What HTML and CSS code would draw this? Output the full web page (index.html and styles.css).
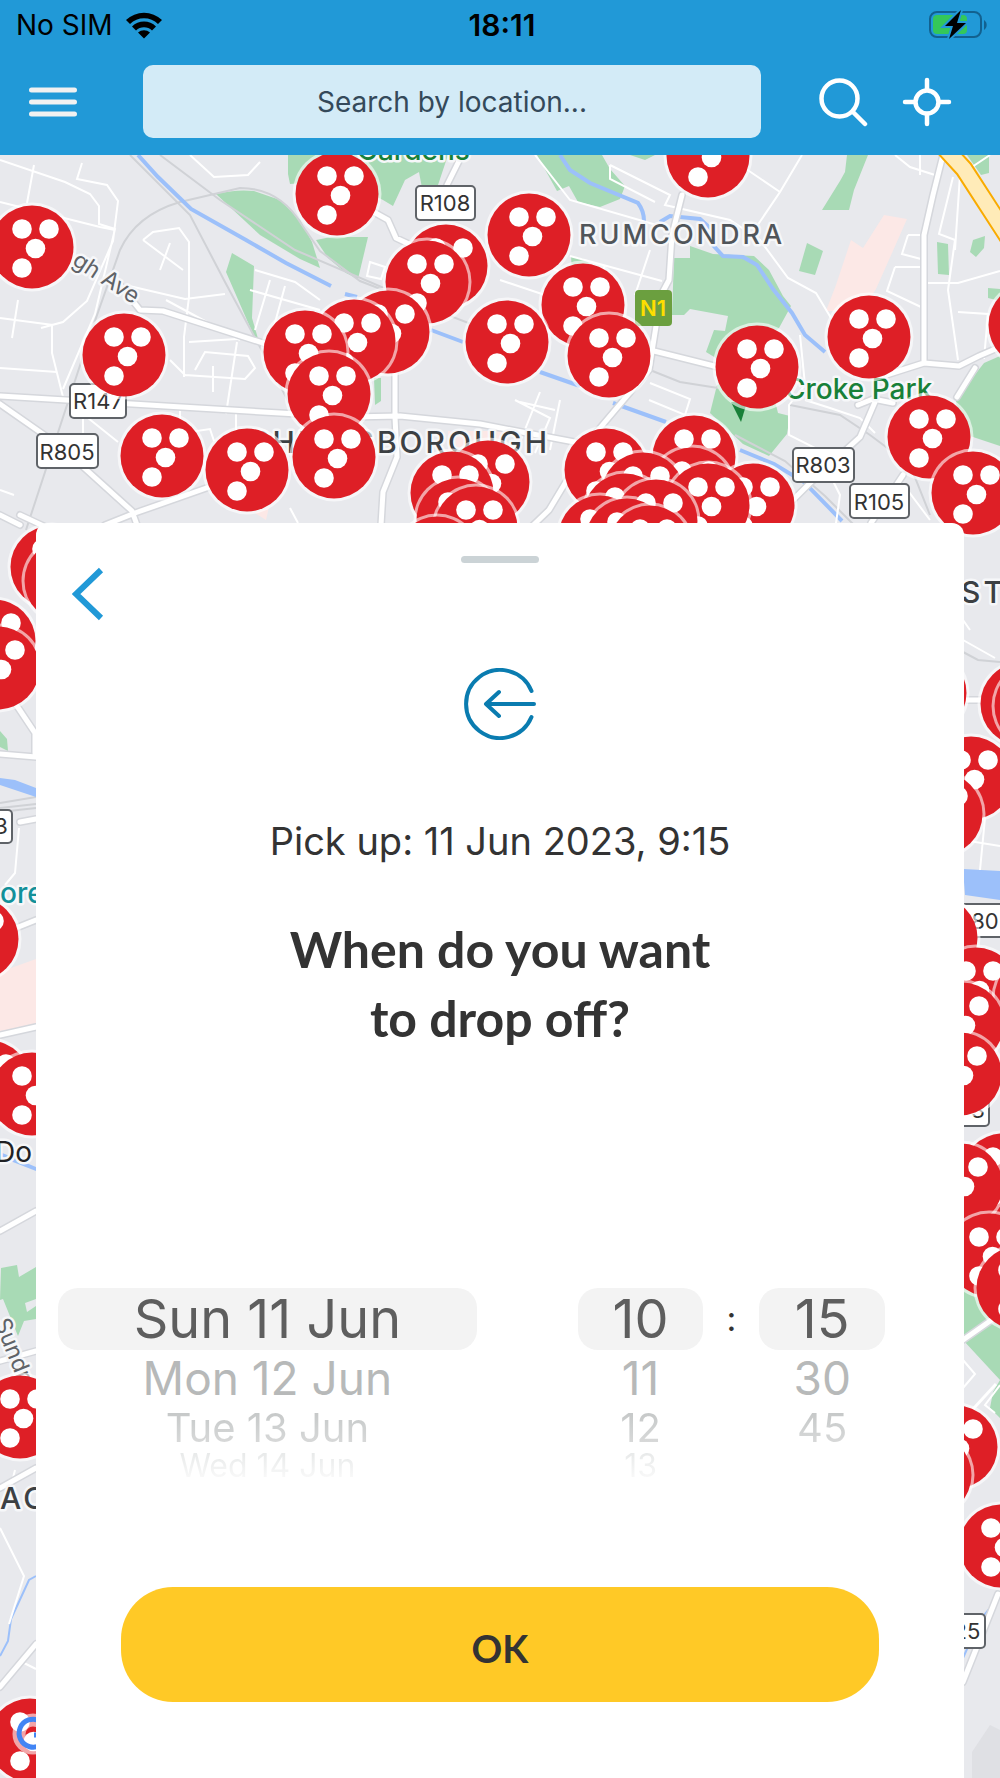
FILE: index.html
```html
<!DOCTYPE html>
<html lang="en">
<head>
<meta charset="utf-8">
<meta name="viewport" content="width=device-width, initial-scale=1">
<title>Choose drop off time</title>
<link rel="stylesheet" href="styles.css">
</head>
<body>
<div class="app">
  <header class="header">
    <div class="status">
      <div class="status-left">
        <span>No SIM</span>
        <svg class="wifi" viewBox="0 0 38 28" aria-hidden="true"><path d="M1 9a26 26 0 0 1 36 0l-4 4a20 20 0 0 0-28 0zM7 15.500a17 17 0 0 1 24 0l-4 4a11.500 11.500 0 0 0-16 0zM13 21.500a9 9 0 0 1 12 0l-6 6z"/></svg>
      </div>
      <time class="clock">18:11</time>
      <svg class="battery" viewBox="0 0 60 30" role="img" aria-label="Battery charging">
        <rect x="2" y="2" width="51" height="25" rx="7" fill="none" stroke="#12618f" stroke-width="2"/>
        <path d="M56 10a6 6 0 0 1 0 10z" fill="#12618f"/>
        <rect x="5" y="5" width="34" height="19" rx="4" fill="#34c759"/>
        <path d="M33 0 17 16h8l-4 13 17-16h-9l4-13z" fill="#000" stroke="#2199d7" stroke-width="4" paint-order="stroke"/>
      </svg>
    </div>
    <div class="toolbar">
      <button class="icon-button" aria-label="Menu"><svg width="50" height="32" viewBox="0 0 50 32"><path d="M3.500 4h43M3.500 16h43M3.500 28h43" stroke="#f1f1f1" stroke-width="5" stroke-linecap="round"/></svg></button>
      <input class="search" type="text" placeholder="Search by location..." aria-label="Search by location">
      <div class="tools">
        <button class="icon-button" aria-label="Search"><svg width="50" height="50" viewBox="0 0 50 50" fill="none" stroke="#fff" stroke-width="4.500" stroke-linecap="round"><circle cx="21.500" cy="21.500" r="18"/><path d="m35 35 12 12"/></svg></button>
        <button class="icon-button" aria-label="My location"><svg width="50" height="50" viewBox="0 0 50 50" fill="none" stroke="#fff" stroke-width="4.500" stroke-linecap="round"><circle cx="25" cy="25" r="11.500"/><path d="M25 3v10M25 37v10M3 25h10M37 25h10"/></svg></button>
      </div>
    </div>
  </header>

  <main class="main">
    <svg class="map" viewBox="0 155 1000 1623" preserveAspectRatio="xMidYMin slice" role="img" aria-label="Map of pick up points">
      <defs>
        <g id="pin">
          <circle r="44.500" fill="#fff" fill-opacity=".6"/>
          <circle r="41.500" fill="#de1f26"/>
          <g fill="#fff"><circle cx="-10" cy="-18" r="9.800"/><circle cx="17" cy="-18" r="9.800"/><circle cx="3.500" cy="1.500" r="9.800"/><circle cx="-10" cy="21" r="9.800"/></g>
        </g>
      </defs>
      <rect y="155" width="1000" height="1623" fill="#e8e9ed"/>

      <!-- parks -->
      <g fill="#a8dab5">
        <path d="M216 194q20-5 38-3l26 9 20 20 12 22 8 26-20-9-40-24z"/>
        <path d="M316 240l15-3h37l-10 42-12-6-18-15z"/>
        <path d="M232 253l22 13-2 52 7 24-6-8-27-62z"/>
        <path d="M288 155h160l-10 30-16 3-3-16-14 8-12 26-10-6-40-20-53 4-2-10z"/>
        <path d="M537 155h65l8 14 15 17-5 13-20 8-22-5-9-16-12 5z"/>
        <path d="M630 155h25l-10 5z"/>
        <path d="M847 155h21l-14 35-5 20h-27l18-29 5-9z"/>
        <path d="M967 155h22v18l-8 2z"/>
        <path d="M674 258h16v-12l23 8 41 2 15 14 14 26 8 10-12 22-30 26-20 12-23-14 8-22 11 1 3-15-38-7-6 6h-12z"/>
        <path d="M807 243l16 8-8 24-16-4zM937 242l11 2 1 31-11-1zM973 240l12-4-1 12-8 9-6-5zM988 288l12 1v12l-12-3z"/>
        <path d="M717 385l36-12 20 20 5 20 12 3-3 18-18 22-26-12-33-31z"/>
        <path d="M956 399l28-36 16-7v90l-30-10-13-22z"/>
        <path d="M374 378h7v23l-6 4z"/>
        <path d="M571 256l13 3 12 10-24 2z"/>
        <path d="M0 731l7 8 1 12-8-4z"/>
        <path d="M1 1268l16-3 2 12 17-10v52l-12 2-6 15-15-37-3 1z"/>
        <path d="M963 1285h37v133l-10-10 3-16 7-12-37-40z"/>
      </g>
      <path d="M25 1303l11-4v7l-9 6z" fill="#e8e9ed"/>
      <!-- hospitals and civic areas -->
      <g fill="#fce8e6">
        <path d="M884 215l23 4-15 34-16 36-14 22h-36l10-26 15-45 12 8z"/>
        <path d="M0 972l36-13v68l-36 4zM448 431h55l-7 40-48-12zM255 513l14-6-3 13z"/>
      </g>
      <path d="M972 1752l18-27 10 5v48h-28z" fill="#dfe0e4"/>

      <!-- railways -->
      <g fill="none" stroke="#d0d2d6" stroke-width="2">
        <path d="M26 530 90 335l30-85q16-35 60-48l60-14q40 0 62 37l18 26 40 30 150 58"/>
        <path d="M160 155l60 45 75 50 145 62M130 155l60 60 35 67 35 65 40 77"/>
        <path d="M650 370l30 12 38 6M735 435l50 26 40 35 30 30M790 405l50 10 30 20 40 30 20 50"/>
        <path d="M0 803l36-6M0 808l36-4M0 812l36-4M963 652l15 8 22 2"/>
      </g>

      <!-- water -->
      <g fill="none" stroke="#9cc0fa" stroke-width="4">
        <path d="M138 155l20 22 33 32 55 31 40 23 45 23"/>
        <path d="M345 294l12 3M431 330l32 12M540 372l40 14M613 403l53 19M740 450l34 14 30 18 38 39"/>
        <path d="M560 155l10 15 20 13 48 20q6 8 6 18M660 222l10-6 30 3 11 10v14l12 13 20 1 14 8 16 24 19 24 13 22 20 17"/>
      </g>
      <path d="M0 1656l8-15 3-22 18-39 7-4M1000 1596l-20 24-17 38" fill="none" stroke="#9cc0fa" stroke-width="2"/>
      <path d="M0 778l15 2 21 8v9l-36-12zM963 869l37 2v29l-35-5zM0 1152l36 15v4l-36-14z" fill="#9cc0fa"/>

      <!-- side streets -->
      <g fill="none" stroke="#fff" stroke-width="2">
        <path d="M0 160l65 22 25 12 9 12v18l16 5-20 85-32 75M34 165l-7 38M82 163l-5 16 30 6 11 16-5 40-26 60-24 21-22 6M0 202l100 25 15 3M0 318l53 7M18 300l-6 38M0 368l57 4M52 325v28l12 48M57 225l-5 52"/>
        <path d="M143 240l10-8 26-4 10 14v55l-5 40v40M143 240l40 30M160 270l10-27M125 285l60 14 40-5M166 300l74 40M189 342l48-3M170 360l15 15 60 4 10-11-7-12-43-4-10 18M213 366v26M237 342l-11 72"/>
        <path d="M255 270l40 12 25 18M250 290l70 20M270 280l-15 50M285 286l-15 55M190 155l24 22 34-2 12-13M370 262l15 5-4 12-14-3zM180 405v23l10 4 20-3 4 12M236 414v28M83 414v28M83 414l35 28M290 508l8 15M0 490l14 5"/>
        <path d="M535 155l35 45 90 26M610 165l60 30-5 10 65 15 30 20 28 38 28 15 15 25M610 165v14l45 23M730 158l50 34M802 155l-22 37-25 37"/>
        <path d="M570 256l92 25M545 265l75 35M650 250l-15 45M605 265l-10 30M500 280l60 20 25 50"/>
        <path d="M650 383l40 16-5 16-36-15M515 400l35 18-15 35M520 402l35 8M540 392l-20 50M560 400l-10 50M800 335l5 50-16 20v30l40 20 11 20 12-5M805 400l25 8 30 10 15 15"/>
        <path d="M895 155l15 12 25 8M920 155v20M953 177l-14 57 16 6-7 50 10 70M990 155l-30 20-5 75M908 235h15M908 235l-6 19 19 5M895 267h28M895 267l-8 24 34 16M928 283h30l42-12M958 312l30 2-4 45"/>
        <path d="M830 475l10 20-5 35M900 480l30 40M760 480l30 30"/>
        <path d="M5 885l10-12 4-45M0 1528l24 48-15 48M20 1661l16 8M15 1470l-5 20M963 620l7 10M963 640l32 18M963 1360l12 14-12 14M1000 1385l-15 20 10 8"/>
        <path d="M963 840l37 6M985 818l-5 52"/>
      </g>
      <path d="M963 1420l33-36" stroke="#fff" stroke-width="3"/>

      <!-- main roads -->
      <g fill="none" stroke-linecap="round" stroke-linejoin="round">
        <path d="M120 285l20 25 23 1 150 48M0 396l280 17 70 4 50-1 80 8 105 20M0 404l60 42 72 65 5 14M105 525l30-12 80-28 25-6M395 360v57l2 40-14 35-2 33M462 155l-15 30M370 210l18 10 8 18 60 28M682 195l-10 40-3 45-8 15-12 75-55 65-45 75-25 24M650 350l68 17M943 155l-10 40-9 40v128l35 3 20-10 21-9M924 363l-44 14M975 368l-18 29M858 405l15-6 20 4M875 402l-15 35-22 20-30 28-20 20M903 475l-32 48M0 515l20 10M20 515l30 14M15 703l20 30v20M0 754l36 3M20 822l16-3M16 928l20-8M0 1035l36-8M0 1231l36-20M0 1361l36-10M0 1488l36-20M0 1687l36-43M963 1340l37-26M963 1682l35-88M963 700h20" stroke="#d5d7dc" stroke-width="8"/>
        <path d="M120 285l20 25 23 1 150 48M0 396l280 17 70 4 50-1 80 8 105 20M0 404l60 42 72 65 5 14M105 525l30-12 80-28 25-6M395 360v57l2 40-14 35-2 33M462 155l-15 30M370 210l18 10 8 18 60 28M682 195l-10 40-3 45-8 15-12 75-55 65-45 75-25 24M650 350l68 17M943 155l-10 40-9 40v128l35 3 20-10 21-9M924 363l-44 14M975 368l-18 29M858 405l15-6 20 4M875 402l-15 35-22 20-30 28-20 20M903 475l-32 48M0 515l20 10M20 515l30 14M15 703l20 30v20M0 754l36 3M20 822l16-3M16 928l20-8M0 1035l36-8M0 1231l36-20M0 1361l36-10M0 1488l36-20M0 1687l36-43M963 1340l37-26M963 1682l35-88M963 700h20" stroke="#fff" stroke-width="5"/>
        <path d="M942 145l22 24 44 68" stroke="#f9ab00" stroke-width="19"/>
        <path d="M942 145l22 24 44 68" stroke="#ffebb8" stroke-width="15"/>
      </g>

      <!-- place names -->
      <g class="halo">
        <text x="357" y="160" class="poi">Gardens</text>
        <text x="785" y="399" class="poi">Croke Park</text>
        <text x="0" y="903" class="poi teal">ore</text>
        <text x="574" y="244" class="area" text-anchor="end">D</text>
        <text x="579" y="244" class="area">RUMCONDRA</text>
        <text x="550" y="453" class="area dark" text-anchor="end">PHIBBSBOROUGH</text>
        <text x="961" y="603" class="area dark">ST</text>
        <text x="0" y="1509" class="area dark">AC</text>
        <text x="-5" y="1162" class="town">Do</text>
        <text x="71" y="264" class="street" transform="rotate(33 71 264)">gh Ave</text>
        <text x="-6" y="1322" class="street" transform="rotate(68 -6 1322)">Sundr</text>
      </g>
      <path d="M731 402h16l-6 20z" fill="#188038"/>

      <!-- road shields -->
      <g fill="#fff" stroke="#5f6368" stroke-width="2">
        <rect x="416" y="186" width="59" height="34" rx="4"/><rect x="70" y="384" width="56" height="34" rx="4"/>
        <rect x="37" y="434" width="61" height="34" rx="4"/><rect x="793" y="448" width="61" height="34" rx="4"/>
        <rect x="850" y="484" width="59" height="34" rx="4"/><rect x="-40" y="810" width="52" height="33" rx="4"/>
        <rect x="940" y="904" width="70" height="33" rx="4"/><rect x="930" y="1095" width="59" height="31" rx="4"/>
        <rect x="926" y="1614" width="59" height="34" rx="4"/>
      </g>
      <rect x="635" y="290" width="37" height="36" rx="4" fill="#6b9f3f"/>
      <g class="shield">
        <text x="445" y="211">R108</text><text x="98" y="409">R147</text><text x="67" y="460">R805</text>
        <text x="823" y="473">R803</text><text x="879" y="510">R105</text><text x="1" y="834">3</text>
        <text x="985" y="929">80</text><text x="978" y="1118">3</text><text x="967" y="1639">25</text>
        <text x="653" y="316" class="national">N1</text>
      </g>

      <!-- pick up points -->
      <g>
        <use href="#pin" x="32" y="247"/><use href="#pin" x="337" y="194"/><use href="#pin" x="124" y="355"/>
        <use href="#pin" x="446" y="266"/><use href="#pin" x="427" y="282"/><use href="#pin" x="388" y="332"/>
        <use href="#pin" x="354" y="341"/><use href="#pin" x="305" y="352"/><use href="#pin" x="329" y="394"/>
        <use href="#pin" x="334" y="457"/><use href="#pin" x="162" y="456"/><use href="#pin" x="247" y="470"/>
        <use href="#pin" x="488" y="482"/><use href="#pin" x="452" y="493"/><use href="#pin" x="458" y="520"/>
        <use href="#pin" x="476" y="528"/><use href="#pin" x="437" y="558"/>
        <use href="#pin" x="529" y="235"/><use href="#pin" x="708" y="156"/><use href="#pin" x="583" y="305"/>
        <use href="#pin" x="609" y="356"/><use href="#pin" x="507" y="342"/><use href="#pin" x="757" y="367"/>
        <use href="#pin" x="869" y="337"/><use href="#pin" x="1030" y="325"/><use href="#pin" x="929" y="437"/>
        <use href="#pin" x="973" y="493"/><use href="#pin" x="694" y="457"/><use href="#pin" x="606" y="470"/>
        <use href="#pin" x="692" y="489"/><use href="#pin" x="643" y="494"/><use href="#pin" x="753" y="505"/>
        <use href="#pin" x="708" y="505"/><use href="#pin" x="625" y="515"/><use href="#pin" x="656" y="521"/>
        <use href="#pin" x="600" y="537"/><use href="#pin" x="627" y="540"/><use href="#pin" x="650" y="547"/>
        <use href="#pin" x="52" y="567"/><use href="#pin" x="66" y="581"/><use href="#pin" x="-6" y="641"/>
        <use href="#pin" x="-2" y="668"/><use href="#pin" x="-23" y="939"/><use href="#pin" x="-11" y="1082"/>
        <use href="#pin" x="32" y="1094"/><use href="#pin" x="20" y="1417"/><use href="#pin" x="30" y="1740"/>
        <use href="#pin" x="925" y="693"/><use href="#pin" x="1022" y="704"/><use href="#pin" x="1036" y="706"/>
        <use href="#pin" x="971" y="778"/><use href="#pin" x="941" y="814"/><use href="#pin" x="936" y="938"/>
        <use href="#pin" x="976" y="989"/><use href="#pin" x="1036" y="998"/><use href="#pin" x="962" y="1024"/>
        <use href="#pin" x="960" y="1074"/><use href="#pin" x="1003" y="1175"/><use href="#pin" x="961" y="1185"/>
        <use href="#pin" x="989" y="1255"/><use href="#pin" x="1018" y="1288"/><use href="#pin" x="956" y="1447"/>
        <use href="#pin" x="930" y="1475"/><use href="#pin" x="1001" y="1546"/>
      </g>
      <!-- map provider mark -->
      <g fill="none"><circle cx="33" cy="1734" r="14" stroke="#fff" stroke-opacity=".6" stroke-width="13"/><path d="M40 1721a14 14 0 1 0 7 14H34" stroke="#4285f4" stroke-width="5"/></g>
    </svg>

    <section class="sheet" aria-labelledby="question">
      <div class="grabber"></div>
      <button class="back" aria-label="Back"><svg width="32" height="54" viewBox="0 0 32 54"><path d="M29 3 4 27l25 24" fill="none" stroke="#2199d7" stroke-width="6"/></svg></button>
      <svg class="dropoff-icon" viewBox="0 0 72 72" fill="none" stroke="#0a7cb0" stroke-width="4" stroke-linecap="round" stroke-linejoin="round" aria-hidden="true"><path d="M67.500 23a34 34 0 1 0 0 26M70 36H22M35 24 22 36l13 12"/></svg>
      <p class="pickup">Pick up: 11 Jun 2023, 9:15</p>
      <h1 class="question" id="question">When do you want<br>to drop off?</h1>
      <div class="picker">
        <div class="wheel date" role="listbox" aria-label="Date">
          <button class="row current" role="option" aria-selected="true">Sun 11 Jun</button>
          <button class="row near" role="option">Mon 12 Jun</button>
          <button class="row far" role="option">Tue 13 Jun</button>
          <button class="row last" role="option">Wed 14 Jun</button>
        </div>
        <div class="wheel" role="listbox" aria-label="Hour">
          <button class="row current" role="option" aria-selected="true">10</button>
          <button class="row near" role="option">11</button>
          <button class="row far" role="option">12</button>
          <button class="row last" role="option">13</button>
        </div>
        <span class="colon">:</span>
        <div class="wheel" role="listbox" aria-label="Minute">
          <button class="row current" role="option" aria-selected="true">15</button>
          <button class="row near" role="option">30</button>
          <button class="row far" role="option">45</button>
        </div>
      </div>
      <button class="ok">OK</button>
    </section>
  </main>
</div>
</body>
</html>
```
FILE: styles.css
```css
* { box-sizing: border-box; }

body {
  margin: 0;
  font-family: Inter, "Liberation Sans", sans-serif;
  color: #333;
}

button {
  border: 0;
  padding: 0;
  background: none;
  color: inherit;
  font: inherit;
  cursor: pointer;
}

svg { display: block; }

.app {
  min-height: 100vh;
  display: flex;
  flex-direction: column;
}

/* Header */
.header {
  background: #2199d7;
  padding-bottom: 17px;
}

.status {
  display: grid;
  grid-template-columns: 1fr auto 1fr;
  align-items: center;
  height: 50px;
  padding: 0 12px 0 16px;
  color: #000;
  font-size: 28px;
  line-height: 32px;
}

.status-left {
  display: flex;
  align-items: center;
  gap: 12px;
}

.wifi { width: 38px; height: 28px; }
.clock { font-size: 30px; font-weight: 600; }
.battery { width: 60px; height: 30px; justify-self: end; }

.toolbar {
  display: flex;
  align-items: center;
  margin-top: 15px;
  padding: 0 48px 0 28px;
}

.icon-button { flex: none; }

.search {
  flex: 1;
  min-width: 0;
  height: 73px;
  margin: 0 57px 0 65px;
  border: 0;
  border-radius: 10px;
  background: #d3ebf7;
  color: #34495a;
  font: inherit;
  font-size: 28px;
  text-align: center;
}

.search::placeholder { color: #34495a; opacity: 1; }

.tools { display: flex; gap: 34px; }

/* Map */
.main {
  position: relative;
  flex: 1;
  overflow: hidden;
}

.map {
  position: absolute;
  inset: 0;
  width: 100%;
  height: 100%;
}

.halo text {
  paint-order: stroke;
  stroke: #f6f7f9;
  stroke-width: 5px;
  stroke-linejoin: round;
}

.poi { font-size: 28px; font-weight: 500; fill: #188038; }
.teal { fill: #12909a; }
.area { font-size: 27px; font-weight: 500; letter-spacing: 3px; fill: #50555a; }
.dark { font-size: 30px; fill: #3c4043; }
.town { font-size: 28px; fill: #202124; }
.street { font-size: 23px; fill: #5f6368; }
.shield { font-size: 22px; fill: #333; text-anchor: middle; }
.national { fill: #ffde00; font-weight: 600; }

/* Bottom sheet */
.sheet {
  position: relative;
  display: flex;
  flex-direction: column;
  align-items: center;
  min-height: 100%;
  margin: 368px 36px 0;
  padding: 33px 22px 76px;
  border-radius: 12px 12px 0 0;
  background: #fff;
}

.grabber {
  width: 78px;
  height: 7px;
  border-radius: 4px;
  background: #cbd3d6;
}

.back {
  align-self: flex-start;
  margin: 4px 0 0 14px;
}

.dropoff-icon {
  width: 72px;
  height: 72px;
  margin-top: 47px;
}

.pickup {
  margin: 77px 0 0;
  font-size: 38px;
  line-height: 48px;
}

.question {
  margin: 50px 0 0;
  font-family: Lato, sans-serif;
  font-size: 50px;
  font-weight: 700;
  line-height: 69px;
  text-align: center;
}

.picker {
  align-self: stretch;
  display: flex;
  align-items: flex-start;
  margin-top: 235px;
  padding-right: 57px;
}

.wheel {
  flex: 126;
  display: flex;
  flex-direction: column;
  height: 204px;
}

.date { flex: 420; margin-right: 101px; }

.row {
  display: block;
  width: 100%;
  text-align: center;
  white-space: nowrap;
}

.current {
  height: 62px;
  border-radius: 20px;
  background: #f3f3f3;
  color: #5e5e5e;
  font-size: 54px;
  line-height: 62px;
}

.near { height: 56px; color: #b7b9b9; font-size: 46px; line-height: 56px; }

.far,
.last {
  background: linear-gradient(#c2c5c5, #dcdddd) text;
  color: transparent;
}

.far { height: 44px; font-size: 40px; line-height: 44px; }

.last {
  height: 32px;
  background-image: linear-gradient(#e6e8e8, #fbfbfb);
  font-size: 32px;
  line-height: 32px;
}

.colon {
  flex: none;
  width: 56px;
  font-size: 34px;
  line-height: 62px;
  text-align: center;
}

.ok {
  width: calc(100% - 126px);
  height: 115px;
  margin-top: 95px;
  padding-top: 6px;
  border-radius: 52px;
  background: #ffc926;
  font-family: Lato, sans-serif;
  font-size: 38px;
  font-weight: 700;
}
```
